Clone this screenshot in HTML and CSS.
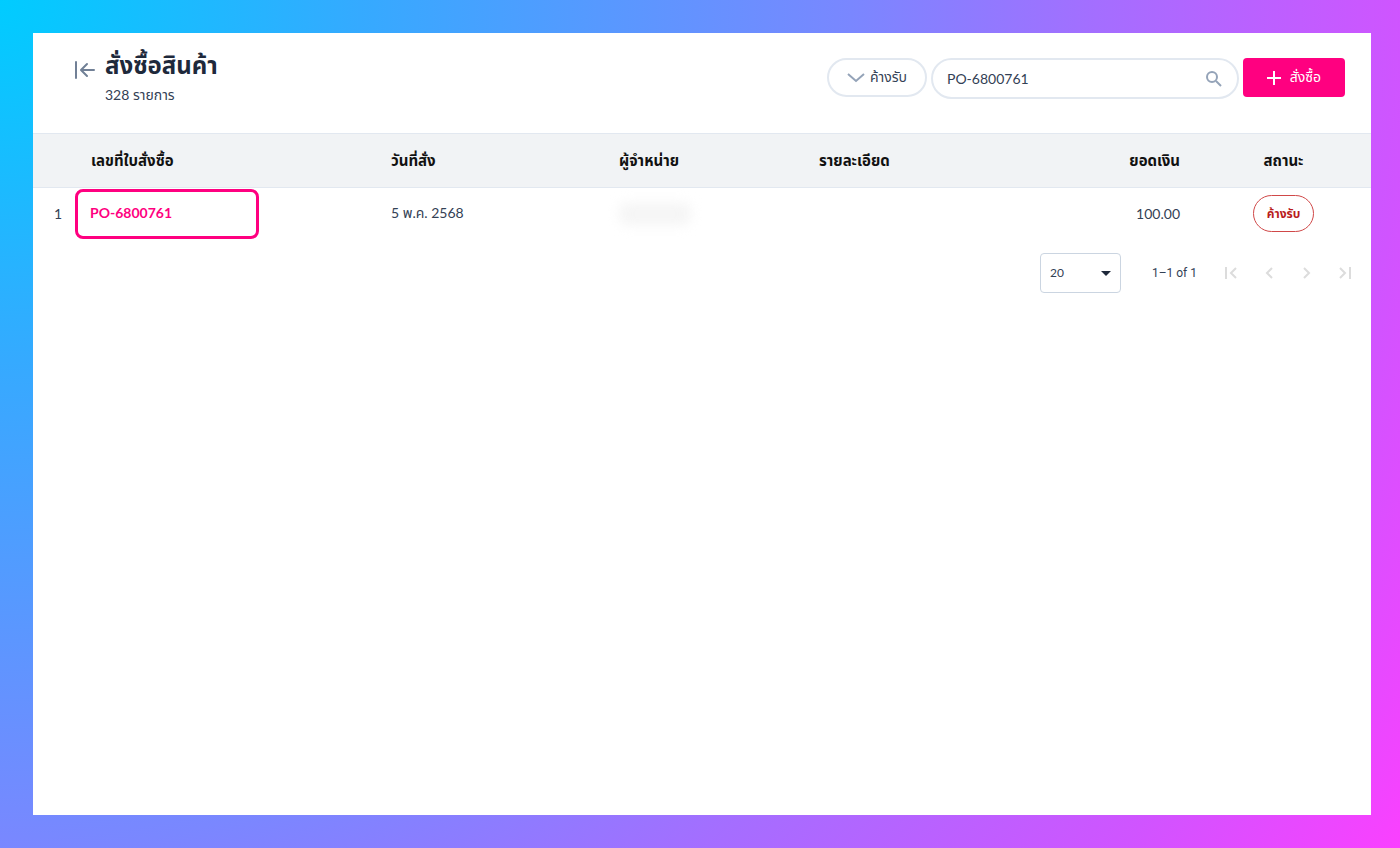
FILE: index.html
```
<!DOCTYPE html>
<html lang="th">
<head>
    <meta charset="UTF-8">
    <title>สั่งซื้อสินค้า</title>
    <link rel="stylesheet" href="styles.css">
</head>
<body>

<main class="page">
    <header class="page-header">
        <button type="button" class="back-btn" aria-label="กลับ">
            <svg viewBox="0 0 22 18" width="22" height="18"><path d="M2 1v16M20 9H8M13 3L7 9l6 6"/></svg>
        </button>
        <div class="heading">
            <h1 class="page-title">สั่งซื้อสินค้า</h1>
            <div class="page-count">328 รายการ</div>
        </div>
        <form class="toolbar" onsubmit="return false;">
            <button type="button" class="filter-btn">
                <svg viewBox="0 0 18 10" width="18" height="10"><path d="M1 1l8 7 8-7"/></svg>
                ค้างรับ
            </button>
            <div class="search-box">
                <input type="text" class="search-input" aria-label="ค้นหา" value="PO-6800761">
                <button type="button" class="search-btn" aria-label="ค้นหา">
                    <svg viewBox="0 0 18 18" width="18" height="18"><circle cx="7" cy="7" r="5"/><path d="M11 11l5 5"/></svg>
                </button>
            </div>
            <button type="button" class="order-btn">
                <svg viewBox="0 0 14 14" width="14" height="14"><path d="M7 0v14M0 7h14"/></svg>
                สั่งซื้อ
            </button>
        </form>
    </header>

    <table class="orders">
        <colgroup>
            <col class="col-no">
            <col class="col-po">
            <col class="col-date">
            <col class="col-vendor">
            <col class="col-detail">
            <col class="col-amount">
            <col class="col-status">
        </colgroup>
        <thead>
            <tr>
                <th></th>
                <th>เลขที่ใบสั่งซื้อ</th>
                <th>วันที่สั่ง</th>
                <th>ผู้จำหน่าย</th>
                <th>รายละเอียด</th>
                <th class="amount">ยอดเงิน</th>
                <th class="status">สถานะ</th>
            </tr>
        </thead>
        <tbody>
            <tr>
                <td class="row-no">1</td>
                <td class="po-cell"><a href="#" class="po-link">PO-6800761</a></td>
                <td>5 พ.ค. 2568</td>
                <td><div class="vendor-mask"></div></td>
                <td></td>
                <td class="amount">100.00</td>
                <td class="status"><span class="status-tag">ค้างรับ</span></td>
            </tr>
        </tbody>
    </table>

    <nav class="pagination">
        <div class="page-size">
            <select class="size-select" aria-label="จำนวนต่อหน้า">
                <option>20</option>
            </select>
            <svg class="size-arrow" viewBox="0 0 10 5" width="10" height="5"><path d="M0 0h10L5 5z"/></svg>
        </div>
        <span class="page-range">1–1 of 1</span>
        <div class="page-btns">
            <button type="button" class="page-btn" aria-label="หน้าแรก" disabled>
                <svg viewBox="0 0 14 12" width="14" height="12"><path d="M2 0v12M12 1L7 6l5 5"/></svg>
            </button>
            <button type="button" class="page-btn" aria-label="ก่อนหน้า" disabled>
                <svg viewBox="0 0 14 12" width="14" height="12"><path d="M10 1L5 6l5 5"/></svg>
            </button>
            <button type="button" class="page-btn" aria-label="ถัดไป" disabled>
                <svg viewBox="0 0 14 12" width="14" height="12"><path d="M4 1l5 5-5 5"/></svg>
            </button>
            <button type="button" class="page-btn" aria-label="หน้าสุดท้าย" disabled>
                <svg viewBox="0 0 14 12" width="14" height="12"><path d="M2 1l5 5-5 5M12 0v12"/></svg>
            </button>
        </div>
    </nav>
</main>

</body>
</html>
```
FILE: styles.css
```
* { box-sizing: border-box; margin: 0; padding: 0 }
body {
    display: flex;
    min-height: 100vh;
    padding: 33px 29px 33px 33px;
    font-family: Lato, "Noto Sans Thai", "Noto Sans", sans-serif;
    font-size: 14px;
    color: #334155;
    background: radial-gradient(circle at top left, #00ccff, #35aaff 22%, #7a87ff 52%, #a46eff 67%, #d054ff 86%, #fa40ff);
}
button, input, select {
    font: inherit;
    color: inherit;
    background: none;
    border: none;
}
button { cursor: pointer }
svg {
    display: block;
    fill: none;
    stroke: currentColor;
    stroke-width: 2;
}

.page {
    flex: 1;
    background: #fff;
}
.page-header {
    display: flex;
    align-items: flex-start;
    height: 100px;
    padding: 0 26px 0 41px;
}
.back-btn {
    margin-top: 28px;
    color: #718096;
}
.back-btn svg {
    stroke-linecap: round;
    stroke-linejoin: round;
}
.heading {
    flex: 1;
    padding: 14px 0 0 9px;
}
.page-title {
    font-size: 24px;
    line-height: 36px;
    color: #1e293b;
}
.page-count { line-height: 24px }

.toolbar {
    display: flex;
    gap: 4px;
    padding-top: 25px;
}
.filter-btn {
    display: flex;
    align-items: center;
    justify-content: center;
    gap: 5px;
    width: 100px;
    height: 39px;
    border: 2px solid #e2e8f0;
    border-radius: 20px;
}
.filter-btn svg { color: #94a3b8 }
.search-box {
    display: flex;
    align-items: center;
    width: 308px;
    height: 41px;
    padding: 0 14px;
    border: 2px solid #e2e8f0;
    border-radius: 21px;
}
.search-input {
    flex: 1;
    min-width: 0;
    outline: none;
}
.search-btn svg { color: #94a3b8 }
.order-btn {
    display: flex;
    align-items: center;
    justify-content: center;
    gap: 9px;
    width: 102px;
    height: 39px;
    color: #fff;
    background: #ff0080;
    border-radius: 4px;
}

/* รายละเอียด ยืดตามพื้นที่ที่เหลือ */
.orders {
    width: 100%;
    table-layout: fixed;
    border-collapse: collapse;
}
.col-no { width: 42px }
.col-po { width: 300px }
.col-date { width: 228px }
.col-vendor { width: 200px }
.col-amount { width: 160px }
.col-status { width: 175px }
.orders th {
    height: 54px;
    padding: 2px 16px 0;
    font-size: 15px;
    font-weight: 700;
    text-align: left;
    color: #111;
    background: #f1f3f5;
    border-top: 1px solid #e2e8f0;
    border-bottom: 1px solid #e2e8f0;
}
.orders td {
    height: 52px;
    padding: 0 16px;
}
.orders .row-no {
    padding: 0 13px 0 0;
    text-align: right;
}
.orders .po-cell { padding: 0 }
.po-link {
    display: flex;
    align-items: center;
    width: 184px;
    height: 50px;
    padding: 0 12px 2px;
    font-weight: 700;
    color: #ff0080;
    text-decoration: none;
    border: 3px solid #ff0080;
    border-radius: 8px;
}
.orders .amount { text-align: right }
.orders .status { text-align: center }
.status-tag {
    display: inline-block;
    padding: 0 13px;
    font-size: 12px;
    font-weight: 700;
    line-height: 35px;
    color: #b91c1c;
    border: 1px solid #d04848;
    border-radius: 19px;
}
.vendor-mask {
    width: 72px;
    height: 22px;
    background: #f5f5f5;
    border-radius: 8px;
    filter: blur(6px);
}

.pagination {
    display: flex;
    align-items: center;
    justify-content: flex-end;
    padding: 13px 19px;
}
.page-size { position: relative }
.size-select {
    width: 81px;
    height: 40px;
    padding-left: 9px;
    font-size: 12px;
    border: 1px solid #cbd5e1;
    border-radius: 4px;
    appearance: none;
}
.size-arrow {
    position: absolute;
    top: 18px;
    right: 10px;
    fill: #1e293b;
    stroke: none;
    pointer-events: none;
}
.page-range {
    margin: 0 27px 0 31px;
    font-family: Roboto, sans-serif;
    font-size: 12px;
}
.page-btns {
    display: flex;
    gap: 24px;
}
.page-btn { color: #dcdcdc }
```
